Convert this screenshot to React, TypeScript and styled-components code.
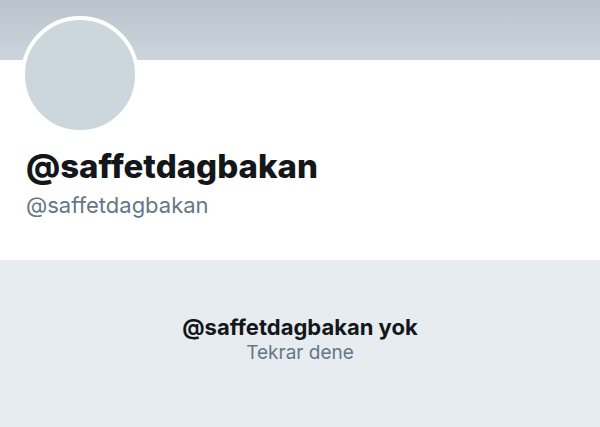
import React from "react";
import styled, { createGlobalStyle } from "styled-components";

const GlobalStyle = createGlobalStyle`
    html, body {
        margin: 0;
        padding: 0;
        background: #e6ecf0;
    }
    body {
        font-family: Inter, "Liberation Sans", sans-serif;
        -webkit-font-smoothing: antialiased;
    }
`;

const Page = styled.div`
    width: 600px;
    height: 427px;
    display: flex;
    flex-direction: column;
    overflow: hidden;
`;

/* Header */
const Banner = styled.div`
    height: 60px;
    flex-shrink: 0;
    background: linear-gradient(to bottom, #bac3cb, #ccd5dd);
`;
const Profile = styled.div`
    height: 200px;
    flex-shrink: 0;
    background-color: white;
    padding: 0 0 0 21px;
    box-sizing: border-box;
`;
const Avatar = styled.div`
    width: 110px;
    height: 110px;
    margin-top: -44px;
    border: 4px solid white;
    border-radius: 50%;
    background-color: #ccd6dd;
`;
const Name = styled.h1`
    margin: 12px 0 0 5px;
    font-size: 33px;
    line-height: 40px;
    font-weight: 800;
    color: #14171a;
`;
const Handle = styled.p`
    margin: 6px 0 0 5px;
    font-size: 22px;
    line-height: 26px;
    color: #657786;
`;

/* Empty state */
const Empty = styled.div`
    flex: 1;
    display: flex;
    flex-direction: column;
    align-items: center;
    padding-top: 53px;
`;
const EmptyTitle = styled.p`
    margin: 0;
    font-size: 22px;
    line-height: 28px;
    font-weight: 700;
    color: #14171a;
`;
const Retry = styled.p`
    margin: 0;
    font-size: 19px;
    line-height: 24px;
    color: #657786;
`;

const App: React.FC = () => {
    return <Page>
        <GlobalStyle />
        <Banner />
        <Profile>
            <Avatar />
            <Name>@saffetdagbakan</Name>
            <Handle>@saffetdagbakan</Handle>
        </Profile>
        <Empty>
            <EmptyTitle>@saffetdagbakan yok</EmptyTitle>
            <Retry>Tekrar dene</Retry>
        </Empty>
    </Page>;
};

export default App;
